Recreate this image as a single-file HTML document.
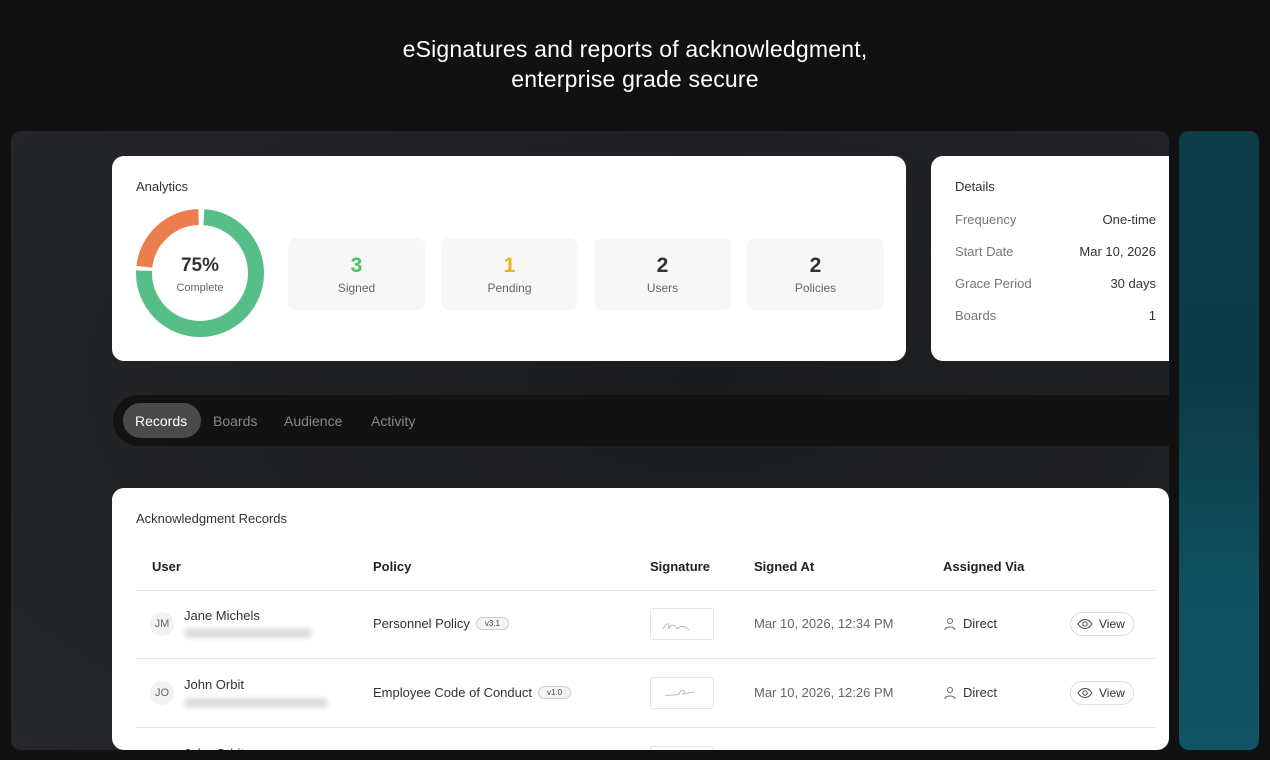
<!DOCTYPE html>
<html><head><style>
*{margin:0;padding:0;box-sizing:border-box}
html,body{width:1270px;height:760px;overflow:hidden}
body{background:#111;font-family:"Liberation Sans",sans-serif;position:relative;color:#222}
.abs{position:absolute}
h1{position:absolute;top:34px;left:0;width:1270px;text-align:center;color:#fff;font-weight:400;font-size:23px;line-height:30px;letter-spacing:.2px}
.panel{left:11px;top:131px;width:1158px;height:619px;border-radius:10px;background:radial-gradient(ellipse at 60% 40%,#1a1b1d 0%,#222327 60%,#25272b 100%)}
.teal{left:1179px;top:131px;width:80px;height:619px;border-radius:10px;background:linear-gradient(180deg,#0e3c47,#0d3a45 40%,#0f5161 75%,#0f5565)}
.card{background:#fff;border-radius:12px}
.stat{top:238px;width:137px;height:72px;background:#f7f7f7;border-radius:8px;text-align:center}
.stat b{display:block;font-size:21px;margin-top:16px;line-height:24px}
.stat span{display:block;font-size:12px;color:#666;margin-top:3px}
.dl{left:955px;font-size:13px;color:#777}
.dr{right:114px;font-size:13px;color:#333;text-align:right}
.th{top:559px;font-size:13px;font-weight:700;color:#222}
.hr{left:136px;width:1020px;height:1px;background:#e3e3e3}
.av{width:24px;height:24px;border-radius:50%;background:#f2f2f2;font-size:11px;color:#666;text-align:center;line-height:24px}
.nm{font-size:13px;color:#333}
.blur{height:10px;border-radius:5px;background:#ddd;filter:blur(2px)}
.pill{display:inline-block;border:1px solid #ccc;background:#f4f4f4;border-radius:8px;font-size:8px;padding:1px 8px;vertical-align:2px;margin-left:6px;color:#444}
.sig{width:64px;height:32px;border:1px solid #e3e3e3;border-radius:3px}
.view{width:64px;height:24px;border:1px solid #ddd;border-radius:12px;font-size:12px;color:#333;line-height:22px;padding-left:28px}
.txt{font-size:13px;color:#555}
</style></head><body>
<h1>eSignatures and reports of acknowledgment,<br>enterprise grade secure</h1>
<div class="abs panel"></div>
<div class="abs teal"></div>

<div class="abs card" style="left:112px;top:156px;width:794px;height:205px"></div>
<div class="abs" style="left:136px;top:179px;font-size:13px;color:#333">Analytics</div>
<svg class="abs" style="left:134px;top:207px" width="132" height="132" viewBox="0 0 132 132">
<circle cx="66" cy="66" r="56" fill="none" stroke="#57be88" stroke-width="16" stroke-dasharray="262 90" stroke-dashoffset="-4" transform="rotate(-90 66 66)"/>
<circle cx="66" cy="66" r="56" fill="none" stroke="#ec7e4e" stroke-width="16" stroke-dasharray="80 272" stroke-dashoffset="-270" transform="rotate(-90 66 66)"/>
</svg>
<div class="abs" style="left:150px;top:255px;width:100px;text-align:center;font-size:19px;font-weight:700;color:#333">75%</div>
<div class="abs" style="left:150px;top:282px;width:100px;text-align:center;font-size:11px;color:#666">Complete</div>
<div class="abs stat" style="left:288px"><b style="color:#4cc35d">3</b><span>Signed</span></div>
<div class="abs stat" style="left:441px"><b style="color:#e6b51e">1</b><span>Pending</span></div>
<div class="abs stat" style="left:594px"><b style="color:#333">2</b><span>Users</span></div>
<div class="abs stat" style="left:747px"><b style="color:#333">2</b><span>Policies</span></div>

<div class="abs card" style="left:931px;top:156px;width:238px;height:205px;border-radius:12px 0 0 12px"></div>
<div class="abs" style="left:955px;top:179px;font-size:13px;color:#333">Details</div>
<div class="abs dl" style="top:212px">Frequency</div><div class="abs dr" style="top:212px">One-time</div>
<div class="abs dl" style="top:244px">Start Date</div><div class="abs dr" style="top:244px">Mar 10, 2026</div>
<div class="abs dl" style="top:276px">Grace Period</div><div class="abs dr" style="top:276px">30 days</div>
<div class="abs dl" style="top:308px">Boards</div><div class="abs dr" style="top:308px">1</div>

<div class="abs" style="left:113px;top:395px;width:1056px;height:51px;background:#121213;border-radius:26px 0 0 26px"></div>
<div class="abs" style="left:123px;top:403px;width:78px;height:35px;background:#4a4a4a;border-radius:18px"></div>
<div class="abs" style="left:135px;top:413px;font-size:14px;color:#fff">Records</div>
<div class="abs" style="left:213px;top:413px;font-size:14px;color:#888">Boards</div>
<div class="abs" style="left:284px;top:413px;font-size:14px;color:#888">Audience</div>
<div class="abs" style="left:371px;top:413px;font-size:14px;color:#888">Activity</div>

<div class="abs card" style="left:112px;top:488px;width:1057px;height:262px;overflow:hidden">
<div class="abs sig" style="left:538px;top:258px"></div>
<div class="abs nm" style="left:72px;top:258px">John Orbit</div>
</div>
<div class="abs" style="left:136px;top:511px;font-size:13px;color:#333">Acknowledgment Records</div>
<div class="abs th" style="left:152px">User</div>
<div class="abs th" style="left:373px">Policy</div>
<div class="abs th" style="left:650px">Signature</div>
<div class="abs th" style="left:754px">Signed At</div>
<div class="abs th" style="left:943px">Assigned Via</div>
<div class="abs hr" style="top:590px"></div>

<div class="abs av" style="left:150px;top:612px">JM</div>
<div class="abs nm" style="left:184px;top:608px">Jane Michels</div>
<div class="abs blur" style="left:184px;top:628px;width:128px"></div>
<div class="abs txt" style="left:373px;top:616px;color:#333">Personnel Policy<span class="pill">v3.1</span></div>
<div class="abs sig" style="left:650px;top:608px"><svg width="64" height="32"><path d="M12 20c4-8 6-6 6 0 2-6 6-4 8 0 4-4 8-3 12 1" fill="none" stroke="#aaa" stroke-width=".8"/></svg></div>
<div class="abs txt" style="left:754px;top:616px;color:#666">Mar 10, 2026, 12:34 PM</div>
<svg class="abs" style="left:943px;top:617px" width="14" height="14"><circle cx="7" cy="4" r="2.5" fill="none" stroke="#666"/><path d="M2 13c0-4 10-4 10 0" fill="none" stroke="#666"/></svg>
<div class="abs txt" style="left:963px;top:616px;color:#333">Direct</div>
<div class="abs view" style="left:1070px;top:612px">View</div>
<svg class="abs" style="left:1077px;top:618px" width="16" height="12"><path d="M1 6c4-6 10-6 14 0c-4 6-10 6-14 0z" fill="none" stroke="#444"/><circle cx="8" cy="6" r="2.2" fill="none" stroke="#444"/></svg>
<div class="abs hr" style="top:658px"></div>

<div class="abs av" style="left:150px;top:681px">JO</div>
<div class="abs nm" style="left:184px;top:677px">John Orbit</div>
<div class="abs blur" style="left:184px;top:698px;width:144px"></div>
<div class="abs txt" style="left:373px;top:685px;color:#333">Employee Code of Conduct<span class="pill">v1.0</span></div>
<div class="abs sig" style="left:650px;top:677px"><svg width="64" height="32"><path d="M14 18c6-2 10 0 14-2 2-6 8-4 4 0 4 0 8-2 12-2" fill="none" stroke="#aaa" stroke-width=".8"/></svg></div>
<div class="abs txt" style="left:754px;top:685px;color:#666">Mar 10, 2026, 12:26 PM</div>
<svg class="abs" style="left:943px;top:686px" width="14" height="14"><circle cx="7" cy="4" r="2.5" fill="none" stroke="#666"/><path d="M2 13c0-4 10-4 10 0" fill="none" stroke="#666"/></svg>
<div class="abs txt" style="left:963px;top:685px;color:#333">Direct</div>
<div class="abs view" style="left:1070px;top:681px">View</div>
<svg class="abs" style="left:1077px;top:687px" width="16" height="12"><path d="M1 6c4-6 10-6 14 0c-4 6-10 6-14 0z" fill="none" stroke="#444"/><circle cx="8" cy="6" r="2.2" fill="none" stroke="#444"/></svg>
<div class="abs hr" style="top:727px"></div>
</body></html>
